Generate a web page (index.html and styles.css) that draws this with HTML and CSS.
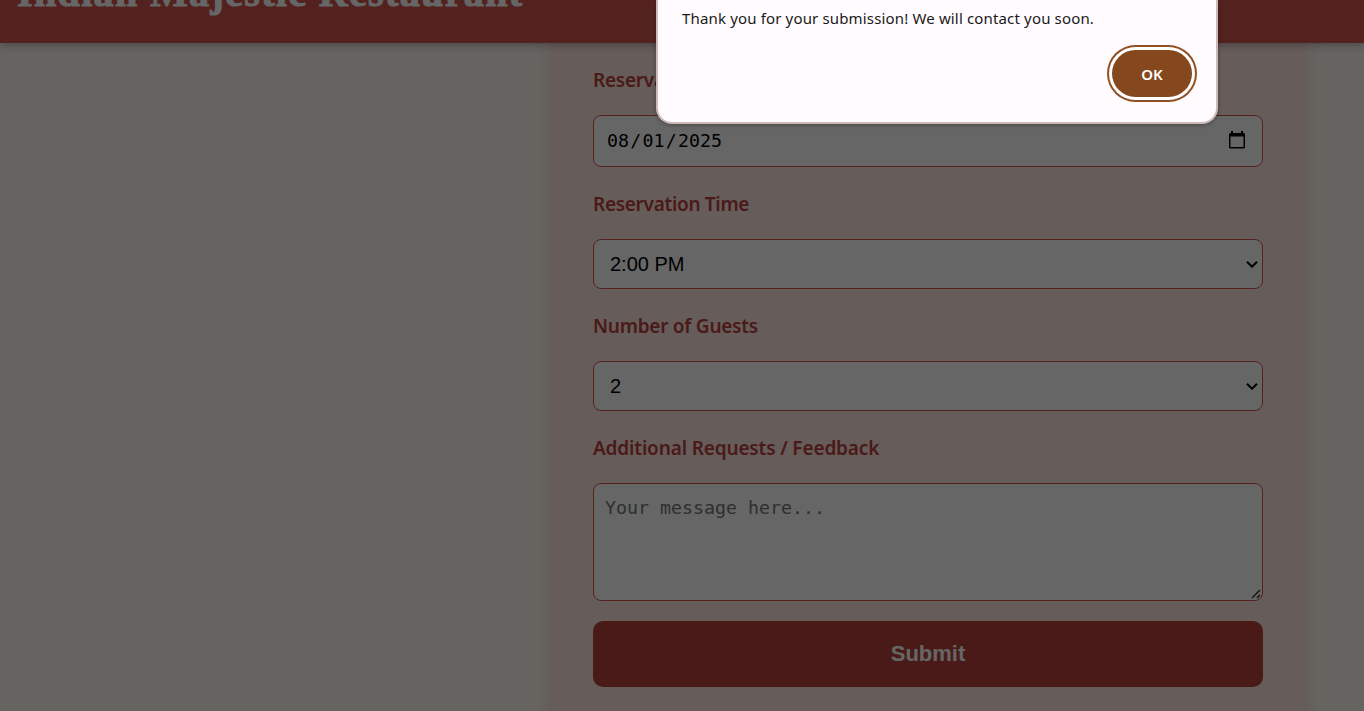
FILE: index.html
```html
<!DOCTYPE html>
<html lang="en">
<head>
<meta charset="utf-8">
<title>Indian Majestic Restaurant</title>
<link rel="stylesheet" href="styles.css">
</head>
<body>
<header class="site-header"><h1 class="site-title">Indian Majestic Restaurant</h1></header>
<main class="page">
  <form class="panel">
    <label class="label">Reservation Date</label>
    <div class="field date">
      <span class="date-value">08<i class="slash">/</i>01<i class="slash">/</i>2025</span>
      <svg class="calendar" width="16" height="18" viewBox="0 0 16 18"><path fill="#000" fill-rule="evenodd" d="M2 0h2v2h8V0h2v2h.5A1.500 1.500 0 0 1 16 3.500v12.500a1.500 1.500 0 0 1-1.500 1.500h-13A1.500 1.500 0 0 1 0 16V3.500A1.500 1.500 0 0 1 1.500 2H2zM1.500 5.500v10.500h13V5.500z"/></svg>
    </div>
    <label class="label time-label">Reservation Time</label>
    <div class="field select"><span>2:00 PM</span><svg class="chevron" width="12" height="8" viewBox="0 0 12 8"><path d="M1 1.700l5 5 5-5" fill="none" stroke="#000" stroke-width="2"/></svg></div>
    <label class="label guests-label">Number of Guests</label>
    <div class="field select"><span>2</span><svg class="chevron" width="12" height="8" viewBox="0 0 12 8"><path d="M1 1.700l5 5 5-5" fill="none" stroke="#000" stroke-width="2"/></svg></div>
    <label class="label feedback-label">Additional Requests / Feedback</label>
    <div class="field message"><span>Your message here...</span><svg class="grip" width="10" height="10" viewBox="0 0 10 10"><path d="M1 9l8-8M6 9l3-3" fill="none" stroke="#333" stroke-width="1.500"/></svg></div>
    <button class="submit" type="button">Submit</button>
  </form>
</main>
<div class="backdrop">
  <div class="dialog" role="alertdialog">
    <p class="dialog-text">Thank you for your submission! We will contact you soon.</p>
    <button class="ok" type="button">OK</button>
  </div>
</div>
</body>
</html>
```
FILE: styles.css
```css
* { box-sizing: border-box; }
body {
  margin: 0;
  height: 711px;
  overflow: hidden;
  background: #fffaf3;
}
.site-header {
  position: relative;
  z-index: 1;
  height: 43px;
  display: flex;
  align-items: flex-end;
  padding: 0 17px 28px;
  background: #d2554b;
  box-shadow: 0 2px 8px rgba(0, 0, 0, .3);
}
.site-title {
  margin: 0;
  font: bold 40px/44px "Liberation Serif", serif;
  letter-spacing: 1.36px;
  -webkit-text-stroke: 1px #fff;
  color: #fff;
  white-space: nowrap;
}
.page { display: flex; padding-left: 551px; }
.panel {
  width: 754px;
  height: 690px;
  padding: 0 42px;
  background: #ffe6e1;
  box-shadow: 0 0 18px rgba(240, 195, 165, .55);
}
.label {
  display: block;
  height: 72px;
  padding-top: 2px;
  font: 600 19px/70px "Noto Sans", sans-serif;
  letter-spacing: -.25px;
  color: #b9413c;
  white-space: nowrap;
}
.time-label { letter-spacing: -.3px; }
.feedback-label { letter-spacing: -.15px; }
.field {
  display: flex;
  align-items: center;
  justify-content: space-between;
  border: 1px solid #d2554b;
  border-radius: 8px;
  background: #fff;
  color: #000;
}
.date {
  height: 52px;
  padding: 0 17px 2px 13px;
  font: 18.300px "DejaVu Sans Mono", monospace;
}
.slash { display: inline-block; width: 13.500px; text-align: center; font-style: normal; }
.select {
  height: 50px;
  padding: 0 4px 0 16px;
  font: 20px "Liberation Sans", sans-serif;
}
.message {
  height: 118px;
  align-items: flex-start;
  padding: 11px 1px 0 11px;
  font: 18.300px/26px "DejaVu Sans Mono", monospace;
  color: #757575;
}
.grip { align-self: flex-end; margin-bottom: 1px; }
.submit {
  display: block;
  width: 100%;
  height: 66px;
  margin-top: 20px;
  padding: 0;
  border: 0;
  border-radius: 10px;
  background: #b9413c;
  color: #fff;
  font: bold 22px "Liberation Sans", sans-serif;
}
.backdrop {
  position: absolute;
  inset: 0;
  z-index: 2;
  display: flex;
  align-items: flex-start;
  padding-left: 656px;
  background: rgba(0, 0, 0, .6);
}
.dialog {
  width: 562px;
  height: 124px;
  display: flex;
  flex-direction: column;
  padding: 6px 24px 0 24px;
  border: 2px solid #cbbab7;
  border-top: 0;
  border-radius: 0 0 16px 16px;
  background: #fffbff;
  box-shadow: 0 1px 4px rgba(0, 0, 0, .3);
}
.dialog-text {
  margin: 0;
  font: 15px/24px "Noto Sans", sans-serif;
  letter-spacing: .155px;
  color: #201a17;
  white-space: nowrap;
}
.ok {
  align-self: flex-end;
  width: 80px;
  height: 47px;
  margin-top: 20px;
  border: 0;
  border-radius: 24px;
  background: #85481d;
  color: #fff;
  font: 600 15px "Noto Sans", sans-serif;
  box-shadow: 0 0 0 3px #fff, 0 0 0 5px #91501f;
}
```
